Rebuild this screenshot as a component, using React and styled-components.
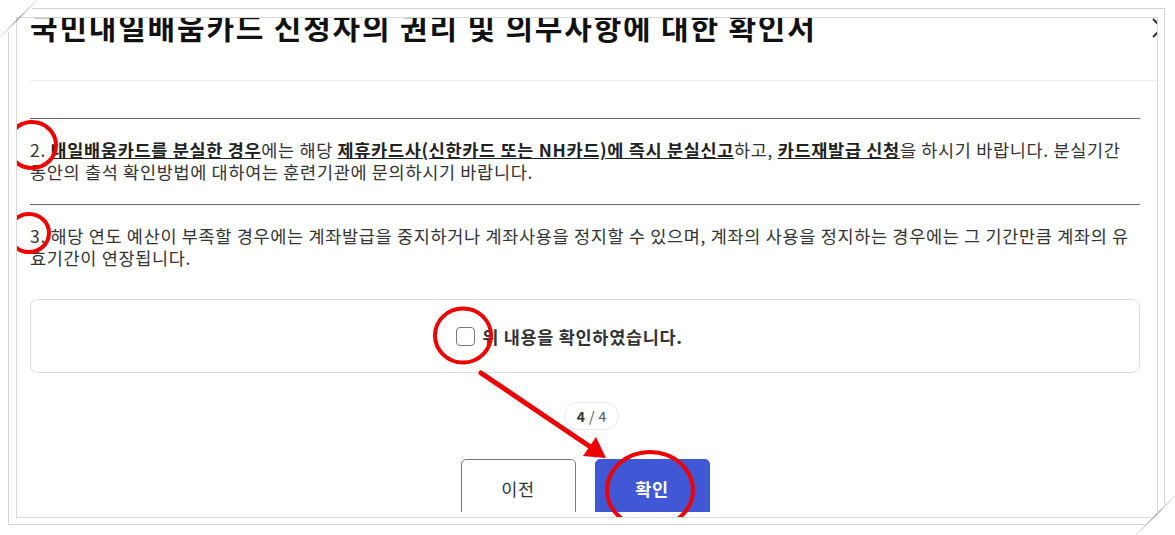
import React from 'react';
import styled, { createGlobalStyle } from 'styled-components';

const GlobalStyle = createGlobalStyle`
  html, body {
    margin: 0;
    background: #fff;
  }
  body {
    font-family: "Noto Sans CJK KR", "Noto Sans", sans-serif;
    color: #333;
  }
`;

const Page = styled.div`
  position: relative;
  width: 1175px;
  height: 535px;
  overflow: hidden;
  padding: 8px 0 0 8px;
  box-sizing: border-box;
`;

const OuterFrame = styled.div`
  width: 1157px;
  height: 517px;
  box-sizing: border-box;
  border: 1px solid #d4d4d4;
  padding: 8px 6px 6px 7px;
`;

const InnerFrame = styled.div`
  position: relative;
  width: 100%;
  height: 100%;
  box-sizing: border-box;
  border: 1px solid #d8d8d8;
  overflow: hidden;
  background: #fff;
`;

const Modal = styled.div`
  height: 494px;
  overflow: hidden;
  padding-left: 13px;
`;

const Header = styled.div`
  position: relative;
  margin-top: -9px;
  padding-bottom: 37px;
  border-bottom: 1px solid #ededed;
`;

const Title = styled.h2`
  margin: 0;
  font-size: 30px;
  line-height: 34px;
  font-weight: 700;
  letter-spacing: 1.8px;
  color: #111;
`;

const CloseIcon = styled.svg`
  position: absolute;
  top: 9px;
  right: -15px;
  width: 20px;
  height: 20px;
`;

const Body = styled.div`
  width: 1110px;
  padding-top: 37px;
`;

const Item = styled.p`
  margin: 0;
  border-top: 1px solid #6a6a6a;
  padding: 20px 0 21px;
  font-size: 17.5px;
  line-height: 22px;
  letter-spacing: 0.68px;
  color: #333;
`;

const Em = styled.strong`
  font-weight: 700;
  color: #222;
  text-decoration: underline;
`;

const ConfirmBox = styled.label`
  margin-top: 9px;
  height: 74px;
  box-sizing: border-box;
  border: 1px solid #dcdcdc;
  border-radius: 8px;
  display: flex;
  align-items: center;
  justify-content: center;
  gap: 7px;
  padding-right: 31px;
`;

const Check = styled.span`
  width: 19px;
  height: 19px;
  box-sizing: border-box;
  border: 1.5px solid #777;
  border-radius: 4px;
  background: #fff;
`;

const ConfirmText = styled.span`
  font-size: 17.5px;
  font-weight: 600;
  letter-spacing: 0.7px;
  color: #333;
`;

const Pager = styled.div`
  margin-top: 29px;
  display: flex;
  justify-content: center;
`;

const Pill = styled.div`
  margin-left: 13px;
  height: 28px;
  box-sizing: border-box;
  padding: 0 12px;
  border: 1px solid #ebebeb;
  border-radius: 14px;
  display: flex;
  align-items: center;
  font-size: 14px;
  color: #555;
  b {
    font-weight: 700;
    color: #333;
    margin-right: 4px;
  }
  span {
    margin-right: 4px;
  }
`;

const Buttons = styled.div`
  margin-top: 29px;
  display: flex;
  justify-content: center;
  gap: 19px;
`;

const Button = styled.button`
  width: 115px;
  height: 58px;
  border-radius: 5px;
  font-family: inherit;
  font-size: 17.5px;
  letter-spacing: 0.7px;
  font-weight: ${({ $primary }) => ($primary ? 700 : 400)};
  color: ${({ $primary }) => ($primary ? '#fff' : '#333')};
  background: ${({ $primary }) => ($primary ? '#4058d6' : '#fff')};
  border: 1px solid ${({ $primary }) => ($primary ? '#4058d6' : '#7a7a7a')};
`;

const Marks = styled.svg`
  position: absolute;
  left: 0;
  top: 0;
  width: 1140px;
  height: 499px;
  pointer-events: none;
`;

const Corner = styled.svg`
  position: absolute;
  left: 0;
  top: 0;
  width: 1175px;
  height: 535px;
  pointer-events: none;
`;

function Annotations() {
  const red = '#ee0000';
  return (
    <Marks viewBox="17 18 1140 499">
      <g fill="none" stroke={red} strokeWidth="4">
        <ellipse cx="32" cy="145" rx="24" ry="23" />
        <ellipse cx="29" cy="233" rx="20" ry="19" />
        <ellipse cx="463" cy="335.5" rx="28" ry="27" />
        <ellipse cx="650" cy="490" rx="43" ry="38" />
        <line x1="481" y1="373" x2="592" y2="448" strokeWidth="5" strokeLinecap="round" />
      </g>
      <polygon points="583,456 596,437 606,458" fill={red} />
    </Marks>
  );
}

function CornerCuts() {
  return (
    <Corner viewBox="0 0 1175 535">
      <defs>
        <linearGradient id="fadeA" x1="0" y1="1" x2="1" y2="0">
          <stop offset="0" stopColor="#bbb" stopOpacity="0.2" />
          <stop offset="0.5" stopColor="#999" />
          <stop offset="1" stopColor="#ccc" stopOpacity="0.3" />
        </linearGradient>
      </defs>
      <rect x="0" y="6" width="32" height="4" fill="#fff" />
      <rect x="6" y="0" width="4" height="32" fill="#fff" />
      <line x1="0" y1="37" x2="37" y2="0" stroke="url(#fadeA)" strokeWidth="1.2" />
      <polygon points="1178,491 1178,540 1129,540" fill="#fff" />
      <line x1="1136" y1="535" x2="1175" y2="496" stroke="url(#fadeA)" strokeWidth="1.2" />
    </Corner>
  );
}

export default function App() {
  return (
    <Page>
      <GlobalStyle />
      <OuterFrame>
        <InnerFrame>
          <Modal>
            <Header>
              <Title>국민내일배움카드 신청자의 권리 및 의무사항에 대한 확인서</Title>
              <CloseIcon viewBox="0 0 20 20">
                <path d="M1 1 L19 19 M1 19 L19 1" stroke="#333" strokeWidth="2" fill="none" />
              </CloseIcon>
            </Header>
            <Body>
              <Item>
                2. <Em>내일배움카드를 분실한 경우</Em>에는 해당 <Em>제휴카드사(신한카드 또는 NH카드)에 즉시 분실신고</Em>하고, <Em>카드재발급 신청</Em>을 하시기 바랍니다. 분실기간 동안의 출석 확인방법에 대하여는 훈련기관에 문의하시기 바랍니다.
              </Item>
              <Item>
                3. 해당 연도 예산이 부족할 경우에는 계좌발급을 중지하거나 계좌사용을 정지할 수 있으며, 계좌의 사용을 정지하는 경우에는 그 기간만큼 계좌의 유효기간이 연장됩니다.
              </Item>
              <ConfirmBox>
                <Check />
                <ConfirmText>위 내용을 확인하였습니다.</ConfirmText>
              </ConfirmBox>
              <Pager>
                <Pill>
                  <b>4</b>
                  <span>/</span>4
                </Pill>
              </Pager>
              <Buttons>
                <Button>이전</Button>
                <Button $primary>확인</Button>
              </Buttons>
            </Body>
          </Modal>
          <Annotations />
        </InnerFrame>
      </OuterFrame>
      <CornerCuts />
    </Page>
  );
}
